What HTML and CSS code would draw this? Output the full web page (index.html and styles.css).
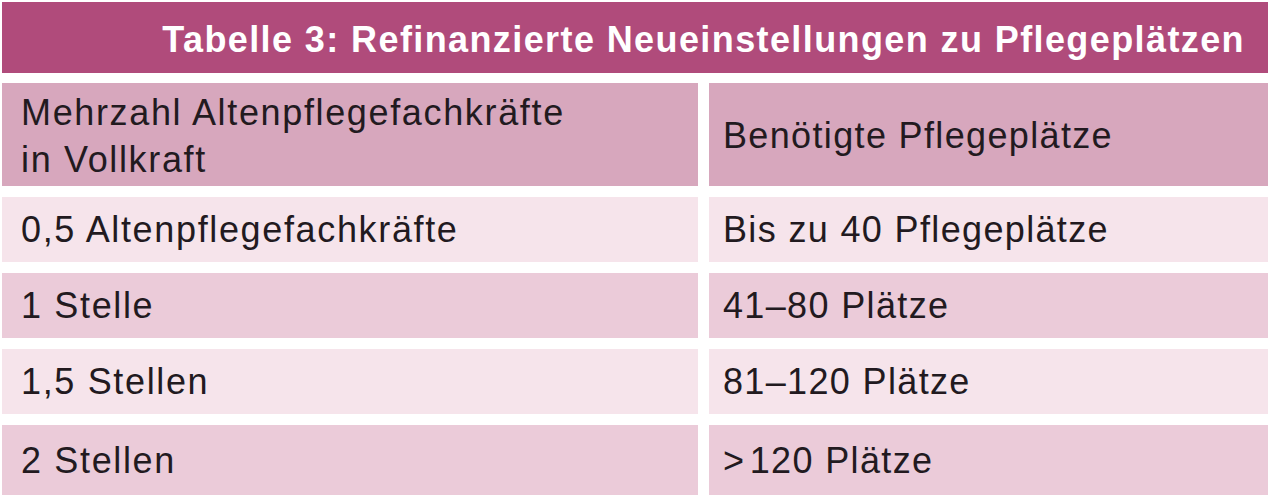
FILE: index.html
```html
<!DOCTYPE html>
<html lang="de">
<head>
<meta charset="utf-8">
<title>Tabelle 3</title>
<link rel="stylesheet" href="styles.css">
</head>
<body>
<div class="page">
  <div class="title-bar">
    <h1 class="title">Tabelle 3: Refinanzierte Neueinstellungen zu Pflegeplätzen</h1>
  </div>
  <div class="table">
    <div class="cell head left">Mehrzahl Altenpflegefachkräfte<br>in Vollkraft</div>
    <div class="cell head right">Benötigte Pflegeplätze</div>
    <div class="cell light left">0,5 Altenpflegefachkräfte</div>
    <div class="cell light right">Bis zu 40 Pflegeplätze</div>
    <div class="cell dark left">1 Stelle</div>
    <div class="cell dark right">41–80 Plätze</div>
    <div class="cell light left">1,5 Stellen</div>
    <div class="cell light right">81–120 Plätze</div>
    <div class="cell dark left">2 Stellen</div>
    <div class="cell dark right">&gt;&#8202;120 Plätze</div>
  </div>
</div>
</body>
</html>
```

FILE: styles.css
```css
html, body {
  margin: 0;
  padding: 0;
  background: #ffffff;
}

.page {
  width: 1268px;
  height: 497px;
  overflow: hidden;
  padding: 2px 0 0 2px;
  box-sizing: border-box;
  font-family: "Liberation Sans", Arial, Helvetica, sans-serif;
}

.title-bar {
  height: 71px;
  background: #b04b7b;
  display: flex;
  align-items: center;
  justify-content: flex-end;
  padding: 4px 23px 0 0;
  box-sizing: border-box;
}

.title {
  margin: 0;
  color: #ffffff;
  font-size: 36px;
  font-weight: bold;
  letter-spacing: 1.4px;
  line-height: 1;
  white-space: nowrap;
}

.table {
  margin-top: 10px;
  display: grid;
  grid-template-columns: 696px 1fr;
  grid-template-rows: 103px 65px 65px 65px 70px;
  column-gap: 11px;
  row-gap: 11px;
}

.cell {
  display: flex;
  align-items: center;
  color: #221a1f;
  font-size: 36px;
  line-height: 47px;
  white-space: nowrap;
}

.cell.left {
  padding-left: 19px;
  letter-spacing: 1.65px;
}

.cell.right {
  padding-left: 14px;
  letter-spacing: 1.35px;
}

.cell.head {
  background: #d7a7bd;
  padding-top: 2px;
}

.cell.light {
  background: #f6e4eb;
}

.cell.dark {
  background: #ebcbd9;
}
```
